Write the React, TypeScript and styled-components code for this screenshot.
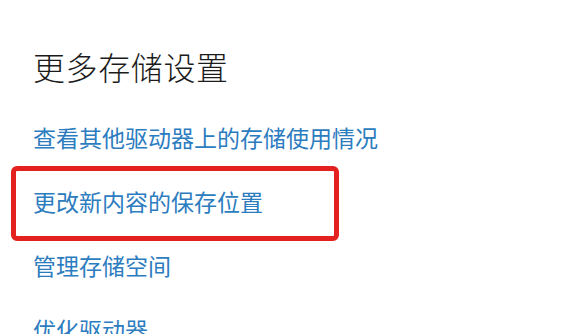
import styled, { createGlobalStyle } from "styled-components"

const GlobalStyle = createGlobalStyle`
  html, body {
    margin: 0;
    padding: 0;
    background: #ffffff;
  }
  body {
    font-family: "Noto Sans CJK SC", "Noto Sans", sans-serif;
  }
`

const Page = styled.div`
  width: 569px;
  height: 334px;
  overflow: hidden;
  background: #ffffff;
  padding: 46px 0 0 33px;
  box-sizing: border-box;
`

const Heading = styled.h2`
  margin: 0 0 35px;
  font-size: 32px;
  line-height: 40px;
  font-weight: 300;
  color: #1b1b1b;
  letter-spacing: 0.6px;
`

const Links = styled.div`
  display: flex;
  flex-direction: column;
  align-items: flex-start;
  gap: 32px;
`

const Link = styled.a<{ $marked?: boolean }>`
  position: relative;
  display: block;
  font-size: 23px;
  line-height: 32px;
  color: #2c7cc0;
  text-decoration: none;
  cursor: pointer;

  ${({ $marked }) => $marked && `
    &::after {
      content: "";
      position: absolute;
      top: -19px;
      left: -22px;
      width: 328px;
      height: 75px;
      box-sizing: border-box;
      border: 5px solid #e3211e;
      border-radius: 6px;
      pointer-events: none;
    }
  `}
`

const items = [
  { label: "查看其他驱动器上的存储使用情况" },
  { label: "更改新内容的保存位置", marked: true },
  { label: "管理存储空间" },
  { label: "优化驱动器" },
]

export default function App() {
  return <>
    <GlobalStyle />
    <Page>
      <Heading>更多存储设置</Heading>
      <Links>
        {items.map(item =>
          <Link key={item.label} $marked={item.marked}>{item.label}</Link>
        )}
      </Links>
    </Page>
  </>
}
